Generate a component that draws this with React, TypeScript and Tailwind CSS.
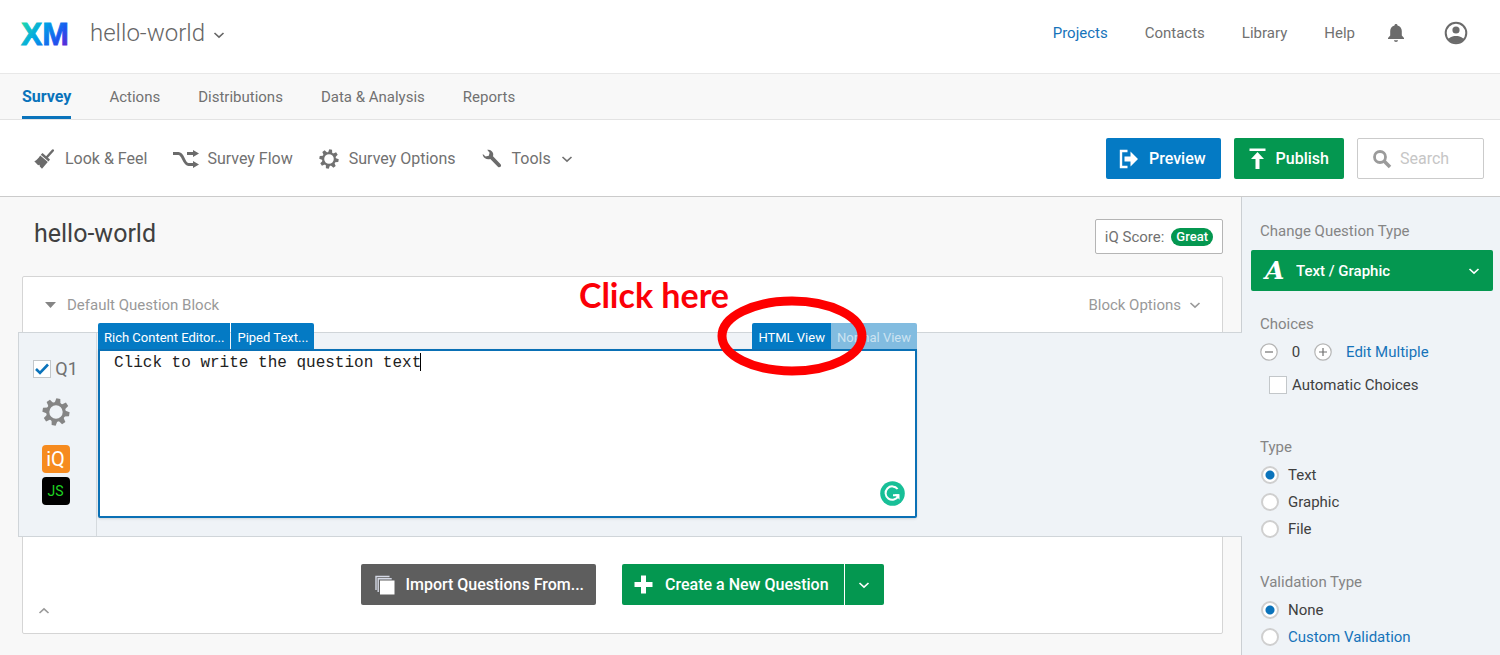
import type { ReactNode } from "react";

export default function SurveyEditor() {
  return (
    <div className="flex min-h-screen flex-col bg-white font-['Roboto',sans-serif] text-[15px] leading-5 text-[#717171]">
      <TopBar />
      <SurveyTabs />
      <Toolbar />
      <div className="flex flex-1 bg-[#f8f8f8]">
        <main className="min-w-0 flex-1 pt-[22px] pr-[18px] pb-4 pl-[22px]">
          <div className="mb-[22px] flex items-start justify-between pl-3">
            <h1 className="text-[25px] leading-[30px] text-[#404040]">hello-world</h1>
            <button className="flex h-[35px] items-center gap-[7px] rounded-xs border border-[#b5b5b5] bg-white px-[9px]">
              iQ Score:
              <span className="rounded-full bg-[#049750] px-[5px] text-[13px] leading-[18px] font-medium text-white">
                Great
              </span>
            </button>
          </div>
          <QuestionBlock />
        </main>
        <Sidebar />
      </div>
    </div>
  );
}

function TopBar() {
  return (
    <header className="flex h-[74px] items-center justify-between border-b border-[#e8e8e8] pr-8 pb-2 pl-[22px]">
      <div className="flex items-center gap-[22px]">
        <XMLogo />
        <button className="flex items-center gap-2 text-[24px] leading-7 font-light text-[#666]">
          hello-world
          <Chevron className="mt-1" />
        </button>
      </div>
      <div className="flex items-center gap-8">
        <nav className="flex gap-[37px]">
          {top_links.map((name, i) => (
            <a key={name} href="#" className={i === 0 ? "text-[#1673ba]" : ""}>
              {name}
            </a>
          ))}
        </nav>
        <div className="flex items-center gap-[39px]">
          <button aria-label="Notifications">
            <BellIcon />
          </button>
          <button aria-label="Account">
            <UserIcon />
          </button>
        </div>
      </div>
    </header>
  );
}

function SurveyTabs() {
  return (
    <nav className="flex h-[46px] gap-[38px] border-b border-[#e3e3e3] bg-[#f8f8f8] px-[22px]">
      {survey_tabs.map((name, i) => (
        <a
          key={name}
          href="#"
          className={
            i === 0
              ? "flex items-center border-b-3 border-[#0a73bb] pt-[3px] text-[16px] font-bold text-[#0a73bb]"
              : "flex items-center border-b-3 border-transparent pt-[3px]"
          }
        >
          {name}
        </a>
      ))}
    </nav>
  );
}

function Toolbar() {
  return (
    <div className="flex items-center justify-between border-b border-[#cbcbcb] pt-[18px] pr-4 pb-[17px] pl-[34px] text-[16px]">
      <div className="flex items-center gap-[26px]">
        <button className="flex items-center gap-[10px]">
          <BrushIcon />
          Look &amp; Feel
        </button>
        <button className="flex items-center gap-2">
          <FlowIcon />
          Survey Flow
        </button>
        <button className="flex items-center gap-[10px]">
          <GearIcon size={20} />
          Survey Options
        </button>
        <button className="flex items-center gap-[10px]">
          <WrenchIcon />
          Tools
          <Chevron />
        </button>
      </div>
      <div className="flex items-center gap-[13px]">
        <button className="flex h-[41px] items-center gap-[10px] rounded-xs bg-[#047ac4] pr-[15px] pl-[13px] font-medium text-white">
          <PreviewIcon />
          Preview
        </button>
        <button className="flex h-[41px] items-center gap-[10px] rounded-xs bg-[#049750] px-[15px] font-medium text-white">
          <PublishIcon />
          Publish
        </button>
        <label className="flex h-[41px] w-[127px] items-center gap-2 rounded-xs border border-[#cbcbcb] bg-white px-[14px]">
          <SearchIcon />
          <input
            type="text"
            placeholder="Search"
            aria-label="Search"
            className="w-full min-w-0 outline-none placeholder:text-[#c6c6c6]"
          />
        </label>
      </div>
    </div>
  );
}

function QuestionBlock() {
  return (
    <section className="rounded-xs border border-[#d5d5d5] bg-white">
      <div className="flex h-[55px] items-center justify-between pr-[21px] pl-[22px] text-[#999]">
        <button className="flex items-center gap-[11px]">
          <svg width="11" height="6" viewBox="0 0 11 6" fill="#858585">
            <path d="M0 0h11L5.5 6z" />
          </svg>
          Default Question Block
        </button>
        <button className="flex items-center gap-2">
          Block Options
          <Chevron />
        </button>
      </div>

      <div className="relative -mr-5 -ml-[5px] flex h-[205px] border border-r-0 border-[#d0d5d9] bg-[#eff3f7]">
        <div className="flex w-[78px] shrink-0 flex-col items-center border-r border-[#d5dade] pt-[26px] pr-1">
          <label className="flex items-center gap-1 text-[18px]">
            <Checkbox defaultChecked />
            Q1
          </label>
          <button aria-label="Question options" className="mt-[19px] text-[#858585]">
            <GearIcon size={28} />
          </button>
          <button className="mt-[19px] flex size-7 items-center justify-center rounded-sm bg-[#f68b1f] text-[20px] text-white">
            iQ
          </button>
          <button className="mt-1 flex size-7 items-center justify-center rounded-sm bg-black text-[14px] text-[#1fd622]">
            JS
          </button>
        </div>
        <QuestionEditor />
      </div>

      <div className="pt-[27px] pb-4">
        <div className="flex justify-center gap-[26px] text-[16px] font-medium text-white">
          <button className="flex h-[41px] items-center gap-[10px] rounded-xs bg-[#5e5e5e] pr-3 pl-[14px]">
            <StackIcon />
            Import Questions From...
          </button>
          <div className="flex gap-px">
            <button className="flex h-[41px] items-center gap-3 rounded-l-xs bg-[#049750] pr-[15px] pl-3">
              <PlusIcon />
              Create a New Question
            </button>
            <button
              aria-label="More question types"
              className="flex w-[39px] items-center justify-center rounded-r-xs bg-[#049750]"
            >
              <Chevron />
            </button>
          </div>
        </div>
        <button aria-label="Collapse block" className="ml-[15px] block text-[#999]">
          <Chevron className="rotate-180" />
        </button>
      </div>
    </section>
  );
}

function QuestionEditor() {
  return (
    <div className="relative -mt-[10px] ml-px h-[195px] w-full max-w-[819px]">
      <div className="flex h-[26px] items-stretch justify-between text-[13px] text-white">
        <div className="flex gap-px">
          <button className="rounded-tl-xs bg-[#047ac4] px-[6px] pt-1">Rich Content Editor...</button>
          <button className="rounded-tr-xs bg-[#047ac4] px-[6px] pt-1">Piped Text...</button>
        </div>
        <div className="flex">
          <button className="rounded-tl-xs bg-[#047ac4] px-[6px] pt-1">HTML View</button>
          <button className="rounded-tr-xs bg-[#82bce0] px-[6px] pt-1 text-[#cde3f1]">Normal View</button>
        </div>
      </div>
      <textarea
        aria-label="Question text"
        defaultValue="Click to write the question text"
        className="block h-[169px] w-full resize-none rounded-b-xs border-2 border-[#0a70b5] bg-white px-[14px] pt-[2px] font-['Liberation_Mono',monospace] text-[16px] leading-5 text-[#222] shadow-sm outline-none"
      />
      <span className="absolute top-[30px] left-[322px] h-[18px] w-px bg-black" />
      <GrammarBadge />

      {/* tutorial markup */}
      <p className="absolute -top-[44px] right-[188px] font-['Lato',sans-serif] text-[34px] leading-8 font-bold whitespace-nowrap text-[#fb0007]">
        Click here
      </p>
      <svg
        className="pointer-events-none absolute -top-[27px] right-[50px]"
        width="150"
        height="80"
        viewBox="0 0 150 80"
        fill="none"
        stroke="#fe0000"
        strokeWidth="9"
      >
        <ellipse cx="75" cy="40" rx="70" ry="35" />
      </svg>
    </div>
  );
}

function Sidebar() {
  return (
    <aside className="w-[259px] shrink-0 border-l border-[#cbcfd3] bg-[#eff3f7] pt-[21px] text-[#404040]">
      <label htmlFor="question-type" className="block pl-[18px] leading-[27px] text-[#858585]">
        Change Question Type
      </label>
      <div className="relative mt-[5px] mr-[7px] ml-[9px] flex items-center text-white">
        <span className="pointer-events-none absolute left-[14px] font-['DejaVu_Serif',serif] text-[25px] font-bold italic">
          A
        </span>
        <select
          id="question-type"
          className="h-[41px] w-full appearance-none rounded-xs bg-[#049750] pl-[45px] text-[15px] font-medium outline-none"
        >
          <option>Text / Graphic</option>
        </select>
        <Chevron className="pointer-events-none absolute right-[13px]" />
      </div>

      <div className="pt-5 pl-[18px]">
        <h2 className="leading-[27px] text-[#858585]">Choices</h2>
        <div className="flex h-[27px] items-center">
          <RoundButton label="Fewer choices">
            <path d="M5 9h8" />
          </RoundButton>
          <span className="w-9 text-center">0</span>
          <RoundButton label="More choices">
            <path d="M5 9h8M9 5v8" />
          </RoundButton>
          <a href="#" className="ml-[14px] text-[#1673ba]">
            Edit Multiple
          </a>
        </div>
        <label className="mt-[6px] ml-[9px] flex h-[27px] items-center gap-[5px]">
          <Checkbox />
          Automatic Choices
        </label>
      </div>

      <RadioGroup title="Type" name="type" options={["Text", "Graphic", "File"]} />
      <RadioGroup title="Validation Type" name="validation" options={["None", "Custom Validation"]} />
    </aside>
  );
}

interface RadioInfo {
  title: string;
  name: string;
  options: string[];
}

function RadioGroup({ title, name, options }: RadioInfo) {
  return (
    <fieldset className={name === "type" ? "pt-9 pl-[18px]" : "pt-[27px] pl-[18px]"}>
      <legend className="contents leading-[27px] text-[#858585]">{title}</legend>
      {options.map((option, i) => (
        <label
          key={option}
          className={
            option === "Custom Validation"
              ? "flex h-[27px] items-center gap-[9px] text-[#1673ba]"
              : "flex h-[27px] items-center gap-[9px]"
          }
        >
          <input
            type="radio"
            name={name}
            defaultChecked={i === 0}
            className="ml-px size-[18px] appearance-none rounded-full border-2 border-[#cfcfcf] bg-white checked:bg-[radial-gradient(circle,#0a73bb_4px,#ffffff_5px)]"
          />
          {option}
        </label>
      ))}
    </fieldset>
  );
}

function Checkbox({ defaultChecked }: { defaultChecked?: boolean }) {
  return (
    <span className="relative size-[18px]">
      <input
        type="checkbox"
        defaultChecked={defaultChecked}
        className="peer block size-[18px] appearance-none border border-[#c3c7ca] bg-white"
      />
      <svg
        className="pointer-events-none absolute inset-0 hidden peer-checked:block"
        width="18"
        height="18"
        viewBox="0 0 18 18"
        fill="none"
        stroke="#0a73bb"
        strokeWidth="2.6"
      >
        <path d="M3 9l4 4 8-8.5" />
      </svg>
    </span>
  );
}

function RoundButton({ label, children }: { label: string; children: ReactNode }) {
  return (
    <button aria-label={label}>
      <svg width="18" height="18" viewBox="0 0 18 18" fill="none" stroke="#717171" strokeWidth="1.2">
        <circle cx="9" cy="9" r="8.2" fill="#fff" stroke="#b5b5b5" />
        {children}
      </svg>
    </button>
  );
}

function XMLogo() {
  return (
    <svg width="46" height="28" viewBox="0 0 46 28" className="overflow-visible">
      <defs>
        <linearGradient id="xm" gradientUnits="userSpaceOnUse" x1="2" y1="0" x2="44" y2="30">
          <stop offset="0" stopColor="#21dbaa" />
          <stop offset="0.4" stopColor="#00a3e6" />
          <stop offset="0.75" stopColor="#1c56f0" />
          <stop offset="1" stopColor="#6a1fd0" />
        </linearGradient>
      </defs>
      <text
        x="-1"
        y="26"
        fill="url(#xm)"
        stroke="url(#xm)"
        strokeWidth="0.8"
        fontFamily="'Liberation Sans', sans-serif"
        fontWeight="700"
        fontSize="32"
      >
        XM
      </text>
    </svg>
  );
}

function Chevron({ className = "" }: { className?: string }) {
  return (
    <svg
      className={className}
      width="12"
      height="12"
      viewBox="0 0 12 12"
      fill="none"
      stroke="currentColor"
      strokeWidth="1.6"
    >
      <path d="M1.5 4L6 8.2 10.5 4" />
    </svg>
  );
}

function BellIcon() {
  return (
    <svg width="18" height="20" viewBox="0 0 18 20" fill="#6b6b6b">
      <path d="M9 1c.9 0 1.5.6 1.5 1.4 2.7.7 4.3 2.8 4.3 5.6v4.5L17 15v1H1v-1l2.200-2.500V8c0-2.800 1.600-4.900 4.300-5.600C7.500 1.600 8.100 1 9 1z" />
      <path d="M7 17.300h4c0 1-.9 1.700-2 1.700s-2-.7-2-1.700z" />
    </svg>
  );
}

function UserIcon() {
  return (
    <svg width="24" height="24" viewBox="0 0 24 24">
      <defs>
        <clipPath id="user-clip">
          <circle cx="12" cy="12" r="10" />
        </clipPath>
      </defs>
      <g fill="#6b6b6b" clipPath="url(#user-clip)">
        <circle cx="12" cy="9" r="3.6" />
        <path d="M3 20c1.5-3.5 5-5 9-5s7.500 1.500 9 5v4H3z" />
      </g>
      <circle cx="12" cy="12" r="10.3" fill="none" stroke="#6b6b6b" strokeWidth="2" />
    </svg>
  );
}

function BrushIcon() {
  return (
    <svg width="21" height="20" viewBox="0 0 21 20">
      <path d="M13 8L18.800 1.500" stroke="#6b6b6b" strokeWidth="2.4" strokeLinecap="round" />
      <path d="M8.500 4l7.500 6.500-1.500 1.900-7.700-6.700z" fill="#6b6b6b" />
      <path d="M6.200 6.400l7.600 6.700L8 19.800l-2.200-2.200-.2-1.800-1.500.4L.3 12.300c2.300-1 4.200-3.300 5.900-5.900z" fill="#6b6b6b" />
    </svg>
  );
}

function FlowIcon() {
  return (
    <svg width="26" height="18" viewBox="0 0 26 18" fill="none" stroke="#6b6b6b" strokeWidth="3">
      <path d="M0 3.500h5.500c5 0 5 11 10 11H21" />
      <path d="M14 3.500h7" />
      <path d="M20 0l6 3.500L20 7zM20 11l6 3.500-6 3.500z" fill="#6b6b6b" stroke="none" />
    </svg>
  );
}

function GearIcon({ size }: { size: number }) {
  return (
    <svg width={size} height={size} viewBox="0 0 28 28" fill="none" stroke="currentColor">
      <circle cx="14" cy="14" r="8.3" strokeWidth="3.2" />
      {[10, 55, 100, 145, 190, 235, 280, 325].map((deg) => (
        <path
          key={deg}
          d="M11 5.500L12 0.500h4l1 5z"
          fill="currentColor"
          stroke="none"
          transform={`rotate(${deg} 14 14)`}
        />
      ))}
    </svg>
  );
}

function WrenchIcon() {
  return (
    <svg width="20" height="20" viewBox="0 0 20 20" fill="#6b6b6b">
      <path d="M5.200.8c2.800-.6 5.600 1.200 6 4 .1.900 0 1.700-.2 2.400l7.600 8c.7.8.6 1.900-.1 2.600-.8.700-1.900.6-2.600-.1L8.300 9.900C5.400 11 2 9.600 1 6.700c-.2-.6-.3-1.200-.2-1.800L3.600 7.400l3.200-.7.8-3z" />
    </svg>
  );
}

function PreviewIcon() {
  return (
    <svg width="20" height="20" viewBox="0 0 20 20">
      <path d="M8.500 2H2v16h6.500" fill="none" stroke="#fff" strokeWidth="2.4" />
      <path d="M5.500 7.500h6v-5l7.500 7.500-7.500 7.500v-5h-6z" fill="#fff" />
    </svg>
  );
}

function PublishIcon() {
  return (
    <svg width="17" height="21" viewBox="0 0 17 21" fill="#fff">
      <path d="M0.500 0.500h16v2.500H0.500z" />
      <path d="M8.500 4l6.500 7h-4.500v10h-4V11H2z" />
    </svg>
  );
}

function SearchIcon() {
  return (
    <svg className="shrink-0" width="20" height="20" viewBox="0 0 20 20" fill="none" stroke="#9b9b9b">
      <circle cx="8" cy="8" r="5.5" strokeWidth="2.8" />
      <path d="M12 12l6 6" strokeWidth="3.6" />
    </svg>
  );
}

function StackIcon() {
  return (
    <svg width="20" height="20" viewBox="0 0 20 20">
      <path d="M1 15V1.500h13.500M3.200 17V3.700h13.500" fill="none" stroke="#d5d9e6" strokeWidth="1.4" />
      <path d="M5 5.500h14.500V19.500H5z" fill="#fff" />
    </svg>
  );
}

function PlusIcon() {
  return (
    <svg width="19" height="19" viewBox="0 0 19 19" fill="none" stroke="#fff" strokeWidth="5">
      <path d="M9.500 0.500v18M0.500 9.500h18" />
    </svg>
  );
}

function GrammarBadge() {
  return (
    <svg className="absolute right-3 bottom-3" width="25" height="25" viewBox="0 0 25 25" fill="none">
      <circle cx="12.5" cy="12.5" r="12.3" fill="#18bf97" />
      <path d="M17.600 8A6.700 6.700 0 1 0 18.300 15M13 14.200h6" stroke="#fff" strokeWidth="2" />
      <path d="M14.500 13.300h5v5.500z" fill="#fff" />
    </svg>
  );
}

const top_links = ["Projects", "Contacts", "Library", "Help"];

const survey_tabs = ["Survey", "Actions", "Distributions", "Data & Analysis", "Reports"];
